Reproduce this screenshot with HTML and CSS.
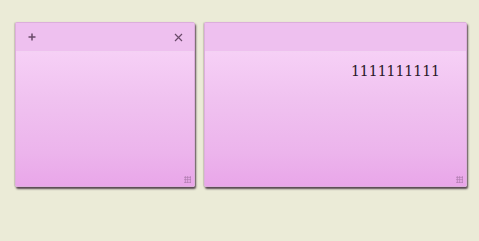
FILE: index.html
```html
<!DOCTYPE html>
<html>
<head>
<meta charset="utf-8">
<link rel="stylesheet" href="styles.css">
</head>
<body>
<div class="board">
  <div class="note note-small">
    <div class="note-head">
      <svg class="icon" width="8" height="8" viewBox="0 0 8 8"><path d="M4 0.5v7M0.5 4h7" stroke="#6a4a6a" stroke-width="1.5"/></svg>
      <svg class="icon" width="9" height="9" viewBox="0 0 9 9"><path d="M1 1l7 7M8 1l-7 7" stroke="#6a4a6a" stroke-width="1.2"/></svg>
    </div>
    <div class="note-body"></div>
    <span class="grip"></span>
  </div>
  <div class="note note-large">
    <div class="note-head"></div>
    <div class="note-body"><span class="note-text">1111111111</span></div>
    <span class="grip"></span>
  </div>
</div>
</body>
</html>
```
FILE: styles.css
```css
html, body {
  margin: 0;
  padding: 0;
  background: #ebebd7;
  width: 479px;
  height: 241px;
  overflow: hidden;
}
.board {
  display: flex;
  gap: 9px;
  padding: 22px 0 0 15px;
}
.note {
  position: relative;
  height: 165px;
  display: flex;
  flex-direction: column;
  border: 1px solid #dcaedc;
  border-radius: 2px;
  box-sizing: border-box;
  box-shadow: 1px 2px 2px rgba(60, 40, 55, 0.85), -1px 0 1px rgba(120,110,100,0.25);
}
.note-small { width: 180px; }
.note-large { width: 263px; }
.note-head {
  height: 28px;
  flex: none;
  background: #eec0ef;
  border-bottom: 1px solid #f3d2f3;
  display: flex;
  justify-content: space-between;
  align-items: center;
  padding: 0 11px 0 12px;
}
.icon { display: block; }
.note-body {
  flex: 1;
  background: linear-gradient(#f6d0f6 0%, #f0c2f0 35%, #ecb4ec 75%, #e9a6e9 100%);
  display: flex;
  justify-content: flex-end;
  align-items: flex-start;
  padding: 11px 26px 0 0;
}
.note-text {
  font-family: "DejaVu Serif", serif;
  font-size: 14px;
  color: #2a1828;
  line-height: 16px;
}
.grip {
  position: absolute;
  right: 3px;
  bottom: 3px;
  width: 7px;
  height: 7px;
  background-image: radial-gradient(circle, #a070a0 0.8px, transparent 1px);
  background-size: 2.5px 2.5px;
  opacity: 0.8;
}
```
